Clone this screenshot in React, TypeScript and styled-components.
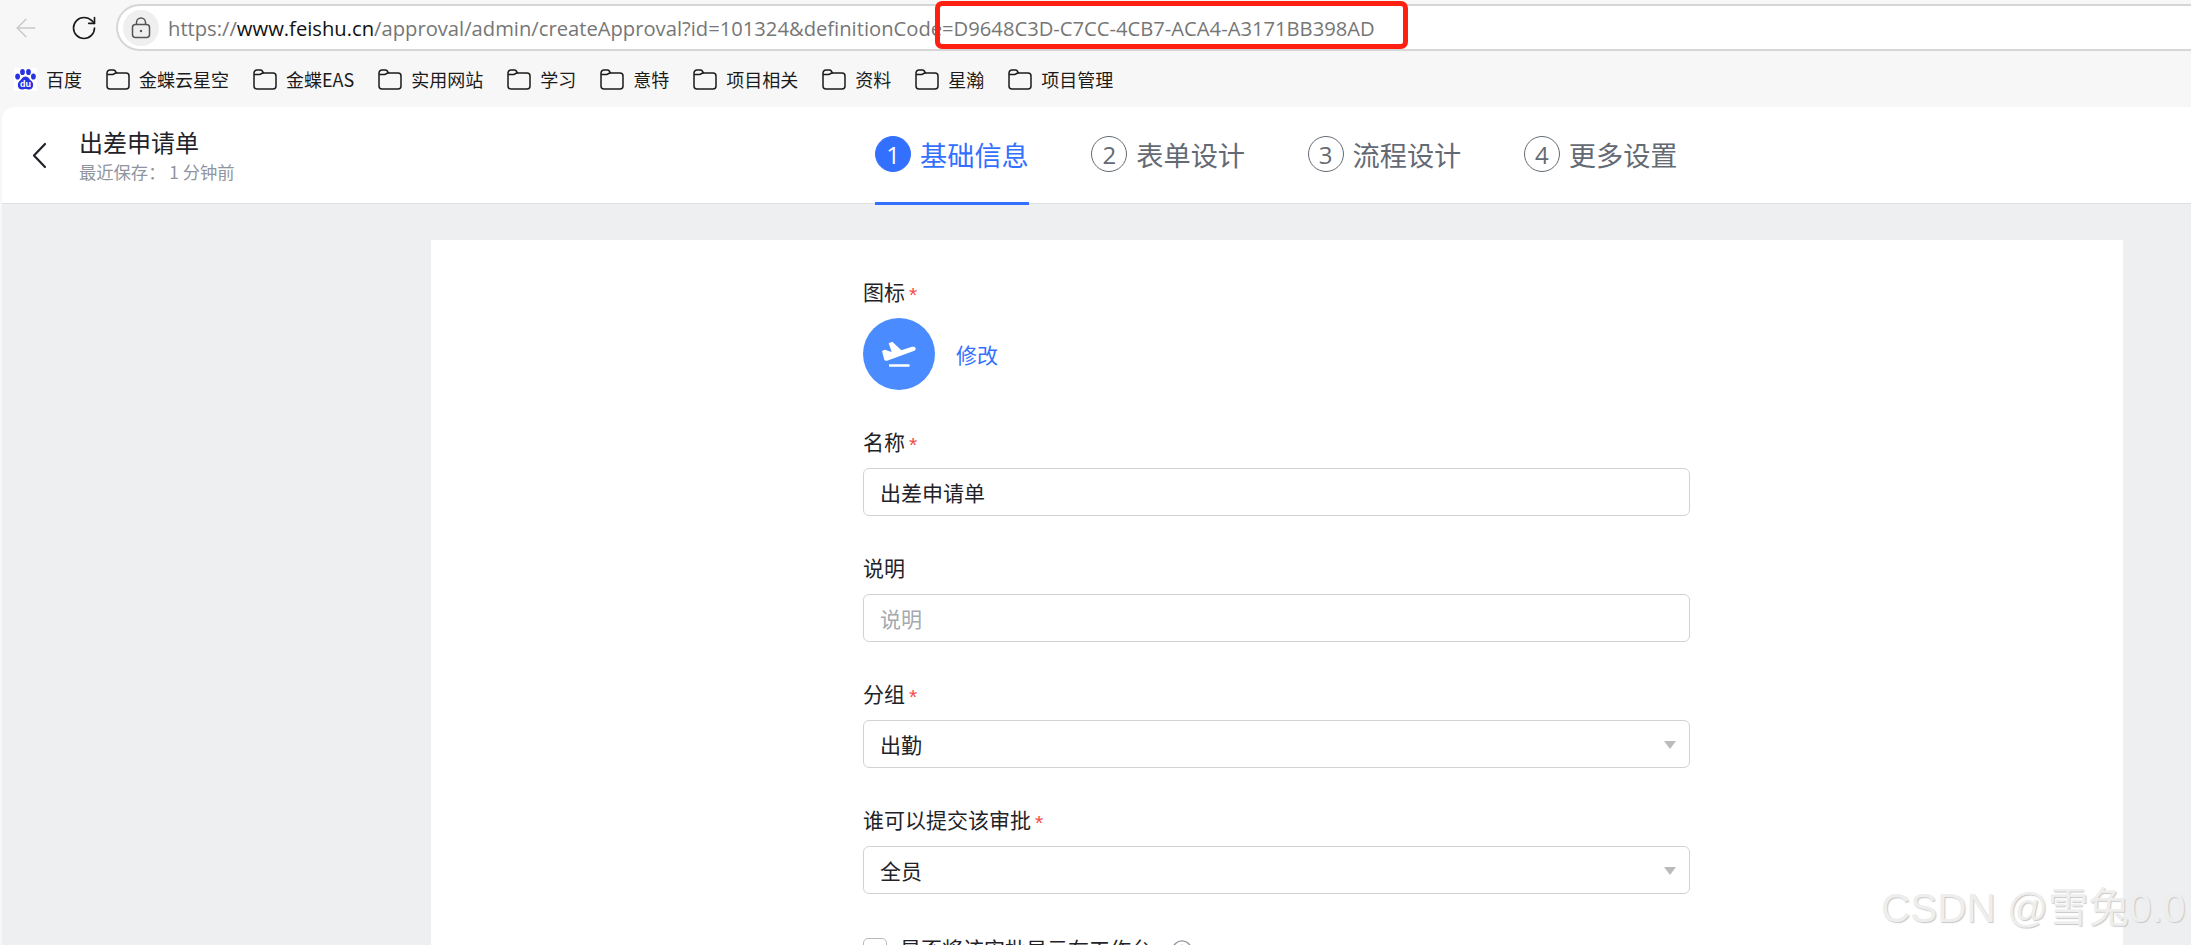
import React from 'react'
import styled, { createGlobalStyle } from 'styled-components'
import { ArrowLeft, RotateCw, CircleHelp } from 'lucide-react'

const cjk = `"Noto Sans CJK SC", "Noto Sans", sans-serif`

const GlobalStyle = createGlobalStyle`
  html, body {
    margin: 0;
    padding: 0;
    height: 100%;
    overflow: hidden;
    background: #f7f7f7;
  }
  * {
    box-sizing: border-box;
  }
`

const Window = styled.div`
  position: relative;
  display: flex;
  flex-direction: column;
  height: 100vh;
  overflow: hidden;
  font-family: ${cjk};
  color: #1f2329;
`

const AddressRow = styled.div`
  display: flex;
  align-items: center;
  height: 51px;
  padding-top: 4px;
`

const NavButton = styled.div<{ $width: number }>`
  display: flex;
  align-items: center;
  justify-content: center;
  width: ${props => props.$width}px;
  color: #1b1b1b;
`

const AddressPill = styled.div`
  display: flex;
  align-items: center;
  flex: 1;
  height: 47px;
  padding-left: 5px;
  background: #fff;
  border: 2px solid #d6d6d6;
  border-right: none;
  border-radius: 24px 0 0 24px;
`

const LockChip = styled.div`
  display: flex;
  align-items: center;
  justify-content: center;
  width: 36px;
  height: 36px;
  border-radius: 50%;
  background: #efefef;
  margin-right: 9px;
`

const Url = styled.div`
  font-family: "Open Sans", sans-serif;
  font-size: 20.2px;
  color: #767676;
  white-space: nowrap;
  b {
    font-weight: 400;
    color: #111;
  }
`

const Highlight = styled.div`
  position: absolute;
  left: 935px;
  top: 1px;
  width: 473px;
  height: 48px;
  border: 5px solid #ff2012;
  border-radius: 7px;
`

const BookmarkBar = styled.div`
  display: flex;
  align-items: center;
  gap: 24px;
  height: 56px;
  padding-left: 14px;
`

const Bookmark = styled.div`
  display: flex;
  align-items: center;
  gap: 9px;
  font-size: 18px;
  color: #1b1b1b;
  white-space: nowrap;
`

const Main = styled.div`
  display: flex;
  flex-direction: column;
  flex: 1;
  min-height: 0;
  margin-left: 2px;
  background: #eeeff1;
  border-top-left-radius: 12px;
  overflow: hidden;
`

const Header = styled.div`
  display: flex;
  align-items: stretch;
  height: 97px;
  background: #fff;
  border-bottom: 1px solid #dee0e3;
`

const BackButton = styled.div`
  display: flex;
  align-items: center;
  justify-content: center;
  width: 77px;
  padding-right: 3px;
`

const TitleBlock = styled.div`
  display: flex;
  flex-direction: column;
  justify-content: center;
  width: 796px;
  padding-bottom: 1px;
`

const Title = styled.div`
  font-size: 24px;
  line-height: 34px;
`

const Saved = styled.div`
  font-size: 17.3px;
  line-height: 26px;
  color: #8f959e;
`

const Steps = styled.div`
  display: flex;
  gap: 62.5px;
`

const Step = styled.div<{ $active?: boolean }>`
  display: flex;
  align-items: center;
  gap: 9px;
  height: 98px;
  padding-bottom: 1px;
  border-bottom: 3px solid ${props => (props.$active ? '#3370ff' : 'transparent')};
  font-size: 27.2px;
  color: ${props => (props.$active ? '#3370ff' : '#646a73')};
`

const StepNumber = styled.span<{ $active?: boolean }>`
  display: flex;
  align-items: center;
  justify-content: center;
  width: 36px;
  height: 36px;
  border-radius: 50%;
  border: 1.4px solid ${props => (props.$active ? '#3370ff' : '#646a73')};
  background: ${props => (props.$active ? '#3370ff' : 'transparent')};
  color: ${props => (props.$active ? '#fff' : '#646a73')};
  font-family: "Open Sans", sans-serif;
  font-size: 24px;
`

const Content = styled.div`
  flex: 1;
  min-height: 0;
  padding: 36px 0 0 429px;
`

const FormCard = styled.div`
  width: 1692px;
  height: 100%;
  padding: 36px 0 0 432px;
  background: #fff;
`

const Field = styled.div`
  width: 827px;
  margin-bottom: 36px;
`

const Label = styled.div`
  display: flex;
  align-items: center;
  height: 30px;
  margin-bottom: 12px;
  font-size: 21px;
  color: #1f2329;
`

const Star = styled.span`
  margin-left: 4px;
  padding-top: 7px;
  color: #f54a45;
  font-family: "Liberation Sans", sans-serif;
  font-size: 21px;
  line-height: 1;
`

const IconRow = styled.div`
  display: flex;
  align-items: center;
  gap: 21px;
`

const AppIcon = styled.div`
  width: 72px;
  height: 72px;
  border-radius: 50%;
  background: #4a8cff;
`

const EditLink = styled.span`
  font-size: 21px;
  color: #3370ff;
`

const Input = styled.div<{ $placeholder?: boolean }>`
  display: flex;
  align-items: center;
  justify-content: space-between;
  height: 48px;
  padding: 0 13px 0 16px;
  background: #fff;
  border: 1.4px solid #d0d3d6;
  border-radius: 6px;
  font-size: 21px;
  color: ${props => (props.$placeholder ? '#a4a9b0' : '#1f2329')};
`

const Caret = styled.span`
  width: 0;
  height: 0;
  border-left: 6.5px solid transparent;
  border-right: 6.5px solid transparent;
  border-top: 8px solid #bbb;
  margin-top: 2px;
`

const CheckRow = styled.div`
  display: flex;
  align-items: center;
  width: 827px;
  margin-top: 39px;
  font-size: 21px;
`

const Checkbox = styled.span`
  width: 24px;
  height: 24px;
  margin-top: 4px;
  margin-right: 13px;
  background: #fff;
  border: 1.4px solid #b5b9be;
  border-radius: 5px;
`

const HelpIcon = styled.span`
  display: flex;
  margin-top: 4px;
  margin-left: 19px;
  color: #8f959e;
`

const Watermark = styled.div`
  position: absolute;
  left: 1881px;
  top: 885px;
  font-family: "Liberation Sans", "Noto Sans CJK SC", sans-serif;
  font-size: 40.5px;
  line-height: 47px;
  white-space: nowrap;
  color: #eeeeee;
  text-shadow: 1px 1px 1px #c8c8c8;
`

const LockIcon = () => (
  <svg width="20" height="22" viewBox="0 0 20 22" fill="none" stroke="#555" strokeWidth="1.5">
    <rect x="1.5" y="7.5" width="17" height="13" rx="3" />
    <path d="M5.5 7.5V5.5a4.5 4.5 0 0 1 9 0v2" />
    <circle cx="10" cy="14" r="1.2" fill="#555" stroke="none" />
  </svg>
)

const FolderIcon = () => (
  <svg width="24" height="21" viewBox="0 0 24 21" fill="none" stroke="#1b1b1b" strokeWidth="1.5">
    <path d="M1 4a3 3 0 0 1 3-3h3.5a2 2 0 0 1 1.6.8L10.5 4H20a3 3 0 0 1 3 3v10a3 3 0 0 1-3 3H4a3 3 0 0 1-3-3V4z" />
    <path d="M1 5.5h5.5a2.5 2.5 0 0 0 2-1L10.500 4" />
  </svg>
)

const BaiduIcon = () => (
  <svg width="23" height="23" viewBox="0 0 23 23">
    <rect width="23" height="23" fill="#fff" />
    <g fill="#2932e1">
      <ellipse cx="3.600" cy="8.500" rx="2.400" ry="3.100" />
      <ellipse cx="8.500" cy="4" rx="2.400" ry="3.100" />
      <ellipse cx="14.500" cy="4" rx="2.400" ry="3.100" />
      <ellipse cx="19.400" cy="8.500" rx="2.400" ry="3.100" />
      <path d="M11.500 8.500c3 0 4 3 6 4.500 2.500 2 2.500 8.500-2.500 8.500-1.500 0-2.200-.5-3.500-.5s-2 .5-3.500.5c-5 0-5-6.500-2.500-8.500 2-1.500 3-4.500 6-4.500z" />
    </g>
    <text x="11.500" y="19" textAnchor="middle" fontFamily="Liberation Sans, sans-serif" fontWeight="700" fontSize="9" fill="#fff">du</text>
  </svg>
)

const PlaneIcon = () => (
  <svg width="72" height="72" viewBox="9 9 216 216">
    <path d="M66 108l9-4 20 7-9-26 11-5 27 26 30-10c7-2 12-1 13 4s-3 7-8 9l-78 28c-3 1-6 0-8-2z" fill="#fff" />
    <rect x="87" y="148" width="62" height="7" rx="2" fill="#fff" />
  </svg>
)

const ChevronIcon = () => (
  <svg width="16" height="27" viewBox="0 0 16 27" fill="none" stroke="#1f2329" strokeWidth="2.200" strokeLinecap="round" strokeLinejoin="round">
    <path d="M14 2L3 13.500 14 25" />
  </svg>
)

const bookmarks = ['金蝶云星空', '金蝶EAS', '实用网站', '学习', '意特', '项目相关', '资料', '星瀚', '项目管理']
const steps = ['基础信息', '表单设计', '流程设计', '更多设置']

export default function App() {
  return (
    <Window>
      <GlobalStyle />
      <AddressRow>
        <NavButton $width={52}>
          <ArrowLeft size={30} strokeWidth={1.200} color="#c9c9c9" />
        </NavButton>
        <NavButton $width={64}>
          <RotateCw size={28} strokeWidth={1.400} />
        </NavButton>
        <AddressPill>
          <LockChip>
            <LockIcon />
          </LockChip>
          <Url>
            https://<b>www.feishu.cn</b>/approval/admin/createApproval?id=101324&definitionCode=D9648C3D-C7CC-4CB7-ACA4-A3171BB398AD
          </Url>
        </AddressPill>
      </AddressRow>
      <BookmarkBar>
        <Bookmark>
          <BaiduIcon />
          百度
        </Bookmark>
        {bookmarks.map(name => (
          <Bookmark key={name}>
            <FolderIcon />
            {name}
          </Bookmark>
        ))}
      </BookmarkBar>
      <Main>
        <Header>
          <BackButton>
            <ChevronIcon />
          </BackButton>
          <TitleBlock>
            <Title>出差申请单</Title>
            <Saved>最近保存： 1 分钟前</Saved>
          </TitleBlock>
          <Steps>
            {steps.map((step, i) => (
              <Step key={step} $active={i === 0}>
                <StepNumber $active={i === 0}>{i + 1}</StepNumber>
                {step}
              </Step>
            ))}
          </Steps>
        </Header>
        <Content>
          <FormCard>
            <Field>
              <Label>
                图标<Star>*</Star>
              </Label>
              <IconRow>
                <AppIcon>
                  <PlaneIcon />
                </AppIcon>
                <EditLink>修改</EditLink>
              </IconRow>
            </Field>
            <Field>
              <Label>
                名称<Star>*</Star>
              </Label>
              <Input>出差申请单</Input>
            </Field>
            <Field>
              <Label>说明</Label>
              <Input $placeholder>说明</Input>
            </Field>
            <Field>
              <Label>
                分组<Star>*</Star>
              </Label>
              <Input>
                出勤
                <Caret />
              </Input>
            </Field>
            <Field>
              <Label>
                谁可以提交该审批<Star>*</Star>
              </Label>
              <Input>
                全员
                <Caret />
              </Input>
            </Field>
            <CheckRow>
              <Checkbox />
              是否将该审批显示在工作台
              <HelpIcon>
                <CircleHelp size={22} strokeWidth={1.500} />
              </HelpIcon>
            </CheckRow>
          </FormCard>
        </Content>
      </Main>
      <Highlight />
      <Watermark>CSDN @雪兔0.0</Watermark>
    </Window>
  )
}
